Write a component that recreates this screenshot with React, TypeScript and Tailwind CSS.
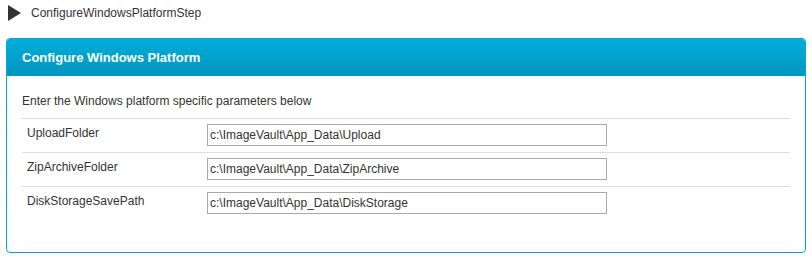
const fields = [
  { label: 'UploadFolder', value: 'c:\\ImageVault\\App_Data\\Upload' },
  { label: 'ZipArchiveFolder', value: 'c:\\ImageVault\\App_Data\\ZipArchive' },
  { label: 'DiskStorageSavePath', value: 'c:\\ImageVault\\App_Data\\DiskStorage' },
]

export default function App() {
  return (
    <div className="w-[812px] h-[262px] bg-white text-[#333] font-['Liberation_Sans',Arial,sans-serif] text-[12px]">
      {/* step title */}
      <div className="flex items-center h-[26px] pl-[8px]">
        <svg width="13" height="16" viewBox="0 0 13 16" className="shrink-0">
          <polygon points="0,0 13,8 0,16" fill="#333" />
        </svg>
        <span className="ml-[10px] leading-4">ConfigureWindowsPlatformStep</span>
      </div>

      {/* panel */}
      <div className="mx-[6px] mt-[12px] border border-[#00aad4] rounded-[4px] overflow-hidden">
        <div className="h-[37px] flex items-center pl-[15px] bg-gradient-to-b from-[#00aed8] to-[#0096bf] text-white font-bold text-[13px]">
          Configure Windows Platform
        </div>
        <div className="px-[15px] pt-[17px] pb-[32px]">
          <p className="leading-4 mb-[9px]">Enter the Windows platform specific parameters below</p>
          {fields.map(f => (
            <div key={f.label} className="flex items-start border-t border-[#dddddd] pl-[5px] pt-[5px] h-[34px]">
              <div className="w-[180px] leading-4 pt-[1px]">{f.label}</div>
              <input
                readOnly
                value={f.value}
                className="w-[400px] h-[22px] border border-[#aaaaaa] pl-[2px] text-[12px] text-[#333] outline-none"
              />
            </div>
          ))}
        </div>
      </div>
    </div>
  )
}
